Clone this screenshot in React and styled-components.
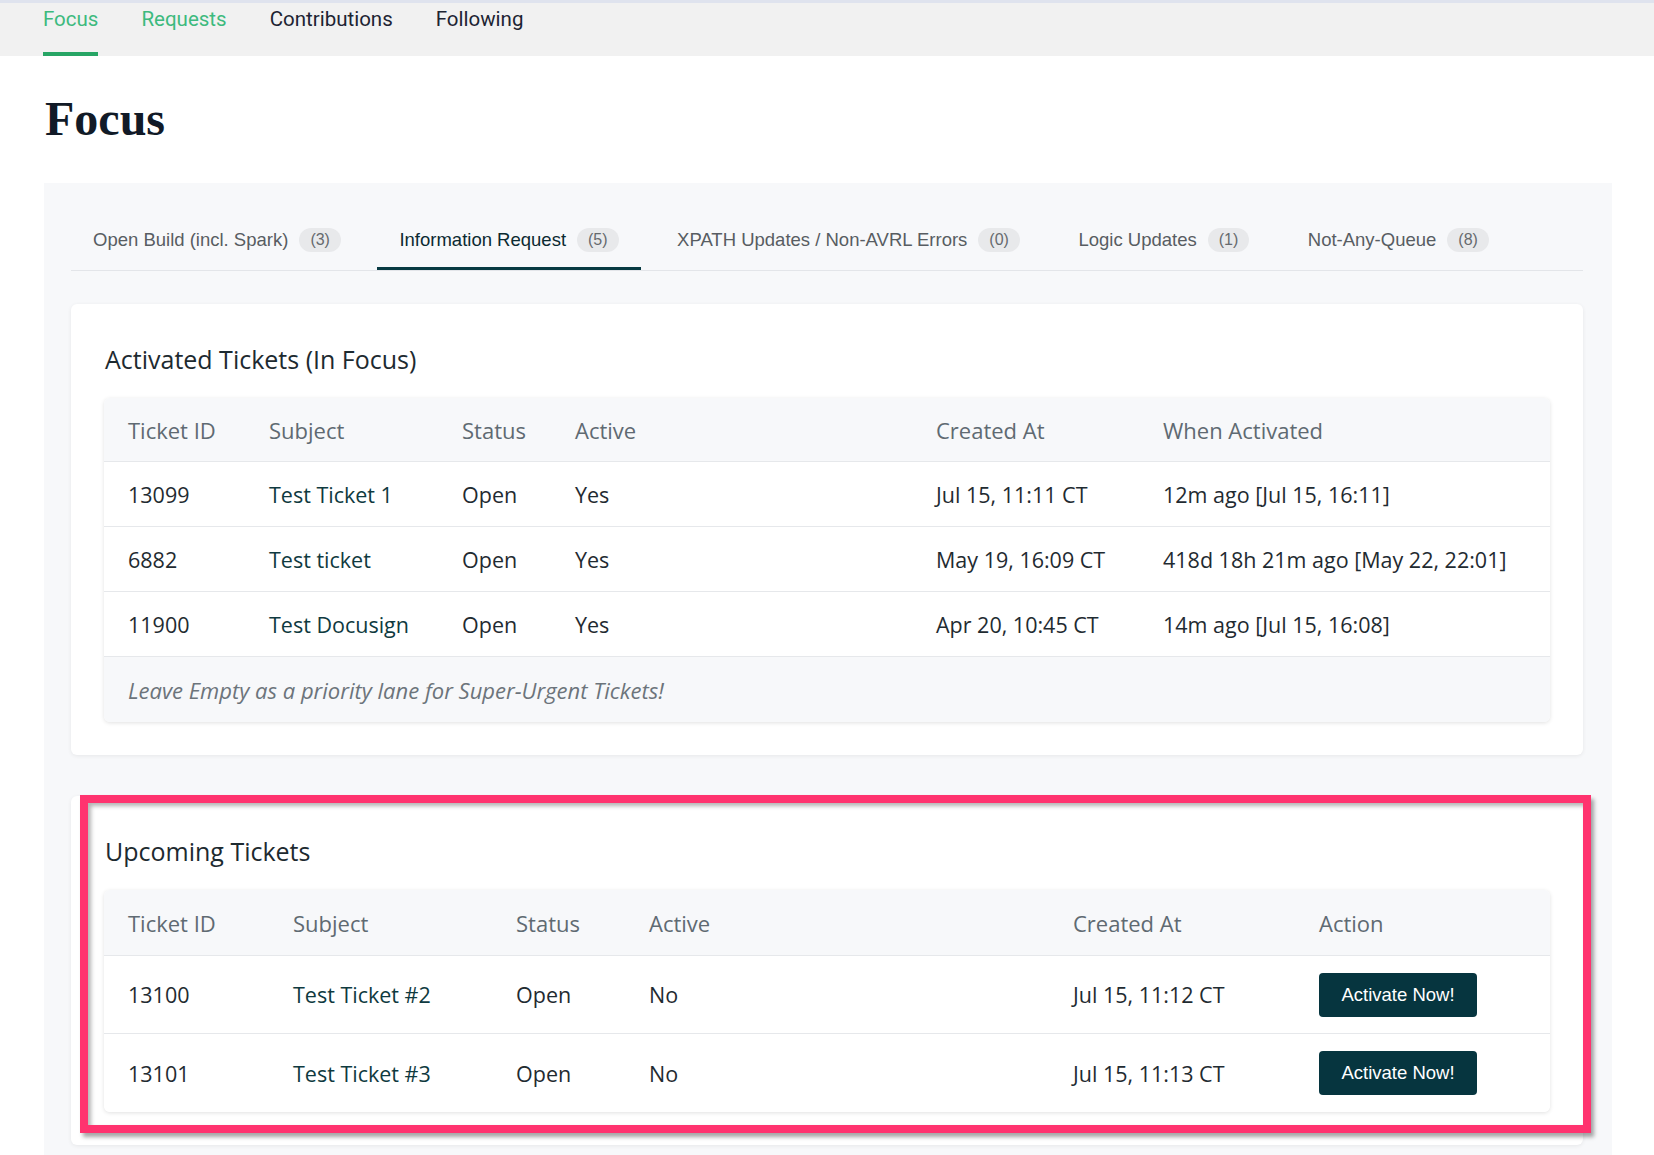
import React from 'react';
import styled, { createGlobalStyle } from 'styled-components';

const GlobalStyle = createGlobalStyle`
body {
  margin: 0;
  background: #fff;
  font-family: "Open Sans", Arial, sans-serif;
}
* { box-sizing: border-box; }
`;

const TopNav = styled.nav`
display: flex;
gap: 43px;
height: 56px;
padding: 0 43px;
background: #f1f1f1;
border-top: 3px solid #dfe3ee;
`;

const NavItem = styled.a`
display: block;
height: 53px;
padding-top: 3px;
font-family: Roboto, Arial, sans-serif;
font-size: 20.5px;
line-height: 26px;
text-decoration: none;
color: ${p => (p.green ? '#3dba7e' : '#1d2433')};
border-bottom: 4px solid ${p => (p.active ? '#27a565' : 'transparent')};
`;

const Page = styled.div`
padding: 0 42px 0 44px;
`;

const Title = styled.h1`
margin: 34px 0 35px 1px;
font-family: "Liberation Serif", "Times New Roman", serif;
font-size: 48px;
line-height: 58px;
font-weight: 700;
color: #111a27;
`;

const Panel = styled.section`
background: #f7f8fa;
padding: 27px 29px 30px 27px;
`;

const Tabs = styled.div`
display: flex;
gap: 14.5px;
border-bottom: 1px solid #e3e5e9;
margin-bottom: 33px;
`;

const Tab = styled.div`
display: flex;
align-items: center;
gap: 11px;
height: 60px;
padding: 0 22px;
font-family: "Liberation Sans", Arial, sans-serif;
font-size: 18.5px;
color: ${p => (p.active ? '#0b2a31' : '#585d62')};
box-shadow: ${p => (p.active ? 'inset 0 -3px 0 #083a42' : 'none')};
`;

const Badge = styled.span`
display: inline-block;
padding: 2px 11px;
border-radius: 12px;
background: #e8e9eb;
color: #666a6e;
font-size: 16px;
line-height: 20px;
`;

const Card = styled.div`
position: relative;
background: #fff;
border-radius: 6px;
box-shadow: 0 1px 4px rgba(0, 0, 0, 0.07);
padding: 38px 33px 33px 33px;
& + & {
  margin-top: 41px;
}
`;

const CardTitle = styled.h2`
margin: 0 0 22px 1px;
font-size: 25px;
line-height: 34px;
font-weight: 500;
color: #1d2a30;
`;

const TableBox = styled.div`
background: #fff;
border-radius: 6px;
overflow: hidden;
box-shadow: 0 1px 4px rgba(0, 0, 0, 0.12);
`;

const Row = styled.div`
display: grid;
grid-template-columns: ${p => p.cols};
align-items: center;
height: ${p => p.h}px;
background: ${p => (p.head ? '#f7f8fa' : '#fff')};
border-bottom: 1px solid #e6e8eb;
&:last-child { border-bottom: none; }
`;

const Cell = styled.div`
padding: 0 24px;
font-size: ${p => (p.head ? 22 : 21.5)}px;
white-space: nowrap;
color: ${p => (p.head ? '#5f6a72' : p.subject ? '#0f3a40' : '#1f2b31')};
font-weight: ${p => (p.head ? 500 : 400)};
`;

const Note = styled.div`
display: flex;
align-items: center;
height: 65px;
padding: 0 24px;
background: #f7f8fa;
font-size: 22px;
font-style: italic;
color: #6c747b;
`;

const ActionButton = styled.button`
width: 158px;
height: 44px;
border: none;
border-radius: 4px;
background: #06353f;
color: #fff;
font-family: "Liberation Sans", Arial, sans-serif;
font-size: 18.5px;
cursor: pointer;
`;

const Highlight = styled.div`
position: absolute;
left: 9px;
top: -1px;
width: 1511px;
height: 338px;
border: 8px solid #ff336f;
pointer-events: none;
box-shadow: 3px 4px 4px rgba(0, 0, 0, 0.35), inset 3px 3px 4px rgba(0, 0, 0, 0.3);
`;

const tabs = [
  { label: 'Open Build (incl. Spark)', count: 3 },
  { label: 'Information Request', count: 5, active: true },
  { label: 'XPATH Updates / Non-AVRL Errors', count: 0 },
  { label: 'Logic Updates', count: 1 },
  { label: 'Not-Any-Queue', count: 8 },
];

const activated = [
  ['13099', 'Test Ticket 1', 'Open', 'Yes', 'Jul 15, 11:11 CT', '12m ago [Jul 15, 16:11]'],
  ['6882', 'Test ticket', 'Open', 'Yes', 'May 19, 16:09 CT', '418d 18h 21m ago [May 22, 22:01]'],
  ['11900', 'Test Docusign', 'Open', 'Yes', 'Apr 20, 10:45 CT', '14m ago [Jul 15, 16:08]'],
];

const upcoming = [
  ['13100', 'Test Ticket #2', 'Open', 'No', 'Jul 15, 11:12 CT'],
  ['13101', 'Test Ticket #3', 'Open', 'No', 'Jul 15, 11:13 CT'],
];

const cols1 = '141px 193px 113px 361px 227px 1fr';
const cols2 = '165px 223px 133px 424px 246px 1fr';

export default function App() {
  return (
    <>
      <GlobalStyle />
      <TopNav>
        <NavItem green active>Focus</NavItem>
        <NavItem green>Requests</NavItem>
        <NavItem>Contributions</NavItem>
        <NavItem>Following</NavItem>
      </TopNav>
      <Page>
        <Title>Focus</Title>
        <Panel>
          <Tabs>
            {tabs.map(t => (
              <Tab key={t.label} active={t.active}>
                {t.label}
                <Badge>({t.count})</Badge>
              </Tab>
            ))}
          </Tabs>

          <Card>
            <CardTitle>Activated Tickets (In Focus)</CardTitle>
            <TableBox>
              <Row head cols={cols1} h={64}>
                {['Ticket ID', 'Subject', 'Status', 'Active', 'Created At', 'When Activated'].map(h => (
                  <Cell head key={h}>{h}</Cell>
                ))}
              </Row>
              {activated.map(r => (
                <Row key={r[0]} cols={cols1} h={65}>
                  {r.map((c, i) => (
                    <Cell key={i} subject={i === 1}>{c}</Cell>
                  ))}
                </Row>
              ))}
              <Note>Leave Empty as a priority lane for Super-Urgent Tickets!</Note>
            </TableBox>
          </Card>

          <Card>
            <CardTitle>Upcoming Tickets</CardTitle>
            <TableBox>
              <Row head cols={cols2} h={66}>
                {['Ticket ID', 'Subject', 'Status', 'Active', 'Created At', 'Action'].map(h => (
                  <Cell head key={h}>{h}</Cell>
                ))}
              </Row>
              {upcoming.map(r => (
                <Row key={r[0]} cols={cols2} h={78}>
                  {r.map((c, i) => (
                    <Cell key={i} subject={i === 1}>{c}</Cell>
                  ))}
                  <Cell><ActionButton>Activate Now!</ActionButton></Cell>
                </Row>
              ))}
            </TableBox>
            <Highlight />
          </Card>
        </Panel>
      </Page>
    </>
  );
}
